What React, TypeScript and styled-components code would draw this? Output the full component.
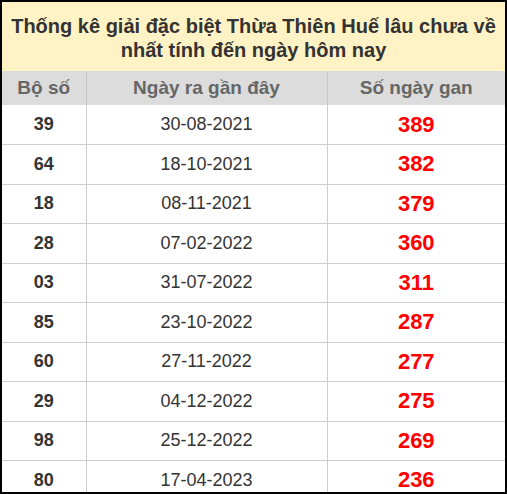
import React from 'react'
import styled, { createGlobalStyle } from 'styled-components'

const Global = createGlobalStyle`
  * { box-sizing: border-box; }
  body {
    margin: 0;
    padding: 0;
    background: #fff;
    overflow: hidden;
    font-family: "Liberation Sans", Arial, sans-serif;
  }
`

const Frame = styled.div`
  width: 507px;
  height: 494px;
  border: 2px solid #000;
  overflow: hidden;
  background: #fff;
`

const Table = styled.table`
  width: 503px;
  border-collapse: collapse;
  table-layout: fixed;
`

const Caption = styled.caption`
  background: #fff2c4;
  color: #333;
  font-weight: bold;
  font-size: 20px;
  line-height: 24px;
  padding: 12px 6px 9px;
  text-align: center;
`

const Head = styled.th`
  background: #dcdcdc;
  color: #666;
  font-size: 19px;
  font-weight: bold;
  height: 34px;
  border-left: 1px solid #c8c8c8;
  text-align: center;
  &:first-child { border-left: none; }
`

const Cell = styled.td<{ $kind: 'num' | 'date' | 'gan' }>`
  height: 39.5px;
  text-align: center;
  border: 1px solid #cdcdcd;
  border-top: none;
  color: ${p => (p.$kind === 'gan' ? '#ff0000' : '#333')};
  font-size: ${p => (p.$kind === 'gan' ? '22px' : '18px')};
  font-weight: ${p => (p.$kind === 'date' ? 'normal' : 'bold')};
  &:first-child { border-left: none; }
  &:last-child { border-right: none; }
`

const rows = [
  ['39', '30-08-2021', '389'],
  ['64', '18-10-2021', '382'],
  ['18', '08-11-2021', '379'],
  ['28', '07-02-2022', '360'],
  ['03', '31-07-2022', '311'],
  ['85', '23-10-2022', '287'],
  ['60', '27-11-2022', '277'],
  ['29', '04-12-2022', '275'],
  ['98', '25-12-2022', '269'],
  ['80', '17-04-2023', '236'],
]

export default function App() {
  return (
    <Frame>
      <Global />
      <Table>
        <Caption>Thống kê giải đặc biệt Thừa Thiên Huế lâu chưa về nhất tính đến ngày hôm nay</Caption>
        <colgroup>
          <col style={{ width: 84 }} />
          <col style={{ width: 241 }} />
          <col style={{ width: 178 }} />
        </colgroup>
        <thead>
          <tr>
            <Head>Bộ số</Head>
            <Head>Ngày ra gần đây</Head>
            <Head>Số ngày gan</Head>
          </tr>
        </thead>
        <tbody>
          {rows.map(([n, d, g]) => (
            <tr key={n}>
              <Cell $kind="num">{n}</Cell>
              <Cell $kind="date">{d}</Cell>
              <Cell $kind="gan">{g}</Cell>
            </tr>
          ))}
        </tbody>
      </Table>
    </Frame>
  )
}
